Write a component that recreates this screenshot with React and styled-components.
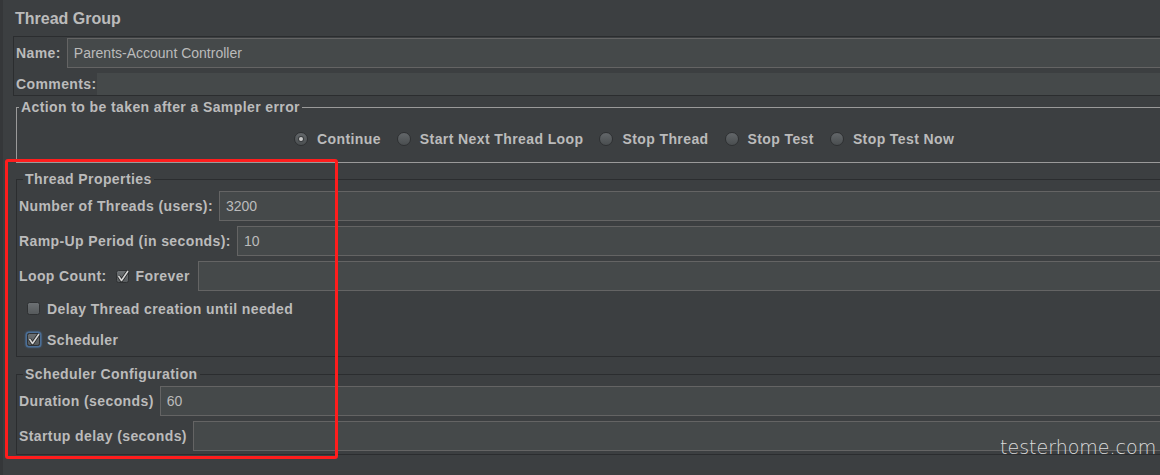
import React from 'react';
import styled, { createGlobalStyle } from 'styled-components';

const GlobalStyle = createGlobalStyle`
  html, body {
    margin: 0;
    padding: 0;
    background: #3c3f41;
    overflow: hidden;
  }
  body {
    font-family: "Liberation Sans", Arial, sans-serif;
    color: #bbbbbb;
  }
`;

const Page = styled.div`
  position: relative;
  box-sizing: border-box;
  width: 1200px;
  height: 475px;
  border-left: 3px solid #353739;
  padding-left: 10px;
`;

const Title = styled.div`
  padding: 9px 0 0 2px;
  font-size: 16px;
  line-height: 20px;
  font-weight: bold;
  color: #bbbbbb;
`;

const NamePanel = styled.div`
  margin-top: 7px;
  border: 1px solid #2b2d2f;
  border-right: none;
  padding: 1px 0 0 2px;
  display: flex;
  flex-direction: column;
  gap: 5px;
`;

const Row = styled.div`
  display: flex;
  align-items: center;
  gap: ${(p) => p.$gap ?? 6}px;
`;

const Label = styled.span`
  font-size: 14px;
  font-weight: bold;
  letter-spacing: 0.4px;
  color: #bbbbbb;
  white-space: nowrap;
`;

const Field = styled.div`
  flex: 1;
  box-sizing: border-box;
  height: ${(p) => p.$h ?? 30}px;
  background: #45494a;
  border: ${(p) => (p.$plain ? 'none' : '1px solid #646464')};
  border-right: none;
  padding-left: 6px;
  display: flex;
  align-items: center;
  font-size: 14px;
  color: #bbbbbb;
`;

const Group = styled.fieldset`
  margin: ${(p) => p.$top}px 0 0 3px;
  padding: ${(p) => p.$pad};
  border: 1px solid ${(p) => (p.$light ? '#9a9a9a' : '#2b2d2f')};
  border-right: none;
  min-width: 0;
`;

const Legend = styled.legend`
  margin-left: ${(p) => p.$indent}px;
  padding: 0 2px;
  font-size: 14px;
  line-height: 17px;
  font-weight: bold;
  letter-spacing: 0.4px;
  color: #bbbbbb;
`;

const RadioRow = styled.div`
  height: 44px;
  display: flex;
  align-items: center;
  padding: 1px 0 0 277px;
  gap: 16px;
`;

const RadioItem = styled.label`
  display: flex;
  align-items: center;
  gap: 9px;
`;

const RadioDot = styled.span`
  box-sizing: border-box;
  width: 14px;
  height: 14px;
  border-radius: 50%;
  border: 1px solid #2e3032;
  background: linear-gradient(#63676a, #4a4e50);
  display: flex;
  align-items: center;
  justify-content: center;

  &::after {
    content: '';
    display: ${(p) => (p.$on ? 'block' : 'none')};
    width: 4px;
    height: 4px;
    border-radius: 50%;
    background: #c8c8c8;
    box-shadow: 0 0 0 1px #3a3d3f;
  }
`;

const Fields = styled.div`
  display: flex;
  flex-direction: column;
  gap: 5px;
`;

const CheckRow = styled.div`
  height: 31px;
  display: flex;
  align-items: center;
  gap: 7px;
  padding-left: 8px;
`;

const InlineCheck = styled.div`
  display: flex;
  align-items: center;
  gap: 7px;
  padding-left: 1px;
`;

const BoxWrap = styled.span`
  display: inline-flex;
  width: 13px;
  height: 13px;
  border-radius: 2px;
  box-shadow: ${(p) => (p.$focus ? '0 0 0 1.5px #4b6f97, 0 0 2px 2px rgba(75,111,151,0.45)' : 'none')};
`;

const Marker = styled.span`
  position: absolute;
  left: 2px;
  top: 159px;
  width: 333px;
  height: 300px;
  box-sizing: border-box;
  border: 3px solid #ff1d1d;
  border-radius: 3px;
  pointer-events: none;
`;

const Watermark = styled.span`
  position: absolute;
  left: 997px;
  top: 436px;
  font-family: "DejaVu Sans", "Liberation Sans", sans-serif;
  font-weight: 200;
  font-size: 19px;
  color: #dcdcdc;
  white-space: nowrap;
`;

function CheckBox({ checked, focus }) {
  return (
    <BoxWrap $focus={focus}>
      <svg width="13" height="13" viewBox="0 0 13 13" overflow="visible">
        <defs>
          <linearGradient id="cbg" x1="0" y1="0" x2="0" y2="1">
            <stop offset="0" stopColor="#6d7174" />
            <stop offset="1" stopColor="#55595b" />
          </linearGradient>
        </defs>
        <rect x="0.5" y="0.5" width="12" height="12" rx="2" fill="url(#cbg)" stroke="#2f3133" />
        {checked && (
          <>
            <path d="M2.5 6 L5.5 10.5 L12 1" fill="none" stroke="#262829" strokeWidth="3.2" strokeLinejoin="round" />
            <path d="M2.5 6 L5.5 10.5 L12 1" fill="none" stroke="#d6d6d6" strokeWidth="1.6" strokeLinejoin="round" />
          </>
        )}
      </svg>
    </BoxWrap>
  );
}

const radios = [
  { label: 'Continue', on: true },
  { label: 'Start Next Thread Loop' },
  { label: 'Stop Thread' },
  { label: 'Stop Test' },
  { label: 'Stop Test Now' },
];

export default function App() {
  return (
    <Page>
      <GlobalStyle />
      <Title>Thread Group</Title>

      <NamePanel>
        <Row>
          <Label>Name:</Label>
          <Field>Parents-Account Controller</Field>
        </Row>
        <Row $gap={0}>
          <Label>Comments:</Label>
          <Field $h={22} $plain />
        </Row>
      </NamePanel>

      <Group $top={3} $pad="0 0 1px 0" $light>
        <Legend $indent={2}>Action to be taken after a Sampler error</Legend>
        <RadioRow>
          {radios.map((r) => (
            <RadioItem key={r.label}>
              <RadioDot $on={r.on} />
              <Label>{r.label}</Label>
            </RadioItem>
          ))}
        </RadioRow>
      </Group>

      <Group $top={8} $pad="3px 0 1px 2px">
        <Legend $indent={4}>Thread Properties</Legend>
        <Fields>
          <Row>
            <Label>Number of Threads (users):</Label>
            <Field>3200</Field>
          </Row>
          <Row>
            <Label>Ramp-Up Period (in seconds):</Label>
            <Field>10</Field>
          </Row>
          <Row $gap={8}>
            <Label>Loop Count:</Label>
            <InlineCheck>
              <CheckBox checked />
              <Label>Forever</Label>
            </InlineCheck>
            <Field />
          </Row>
        </Fields>
        <CheckRow style={{ marginTop: 2 }}>
          <CheckBox />
          <Label>Delay Thread creation until needed</Label>
        </CheckRow>
        <CheckRow>
          <CheckBox checked focus />
          <Label>Scheduler</Label>
        </CheckRow>
      </Group>

      <Group $top={9} $pad="3px 0 3px 2px">
        <Legend $indent={4}>Scheduler Configuration</Legend>
        <Fields>
          <Row>
            <Label>Duration (seconds)</Label>
            <Field>60</Field>
          </Row>
          <Row>
            <Label>Startup delay (seconds)</Label>
            <Field />
          </Row>
        </Fields>
      </Group>

      <Marker />
      <Watermark>testerhome.com</Watermark>
    </Page>
  );
}
